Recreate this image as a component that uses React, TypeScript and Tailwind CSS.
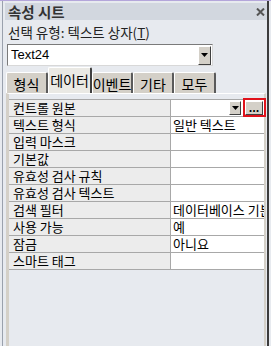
const rows: { label: string; value: string }[] = [
  { label: "컨트롤 원본", value: "" },
  { label: "텍스트 형식", value: "일반 텍스트" },
  { label: "입력 마스크", value: "" },
  { label: "기본값", value: "" },
  { label: "유효성 검사 규칙", value: "" },
  { label: "유효성 검사 텍스트", value: "" },
  { label: "검색 필터", value: "데이터베이스 기본값" },
  { label: "사용 가능", value: "예" },
  { label: "잠금", value: "아니요" },
  { label: "스마트 태그", value: "" },
];

const tabs = [
  { label: "형식", w: "w-[42px]" },
  { label: "데이터", w: "w-[44px]", active: true },
  { label: "이벤트", w: "w-[41px]" },
  { label: "기타", w: "w-[41px]" },
  { label: "모두", w: "w-[42px]" },
];

const Arrow = () => (
  <svg width="7" height="4" viewBox="0 0 7 4">
    <path d="M0 0H7L3.5 4Z" fill="#000" />
  </svg>
);

const App = () => {
  return (
    <div className="w-[271px] h-[346px] bg-[#e7eaef] border-t border-[#b4a6da] overflow-hidden font-['Noto_Sans_CJK_KR',sans-serif] text-black">
      <div className="h-full ml-[2px] mr-[2px] border-l border-[#9aa1ad] border-r-2 border-r-[#3c3c3c] flex flex-col">
        {/* title bar */}
        <div className="mt-[2px] ml-[2px] h-[17px] bg-[#d2d7df] flex items-center justify-between pl-[3px] pr-[2px]">
          <span className="text-[14.5px] font-bold leading-[16px] text-[#333]">속성 시트</span>
          <svg width="9" height="8" viewBox="0 0 9 8">
            <path d="M1 0.5L8 7.5M8 0.5L1 7.5" stroke="#555" strokeWidth="2" />
          </svg>
        </div>

        <div className="mt-[4px] h-[16px] pl-[5px] flex items-center text-[13.5px] leading-[16px] text-[#222] whitespace-nowrap">
          선택 유형: 텍스트 상자(<span className="underline">T</span>)
        </div>

        {/* combo */}
        <div className="mt-[4px] ml-[4px] w-[206px] h-[22px] bg-white border border-t-[#7a7a7a] border-l-[#7a7a7a] border-r-[#d8d8d8] border-b-[#d8d8d8] flex items-center">
          <span className="flex-1 pl-[3px] text-[13px] leading-[16px] font-['Liberation_Sans',sans-serif]">Text24</span>
          <div className="w-[13px] h-[19px] mr-[1px] bg-[#d4d0c8] border-r border-b border-[#404040] border-l border-t border-l-white border-t-white flex items-center justify-center">
            <Arrow />
          </div>
        </div>

        {/* tabs */}
        <div className="mt-[1px] h-[26px] pl-[3px] flex items-end">
          {tabs.map((t) => (
            <div
              key={t.label}
              className={
                t.active
                  ? `${t.w} h-[26px] bg-[#eae9e4] border-l border-t border-white border-r-2 border-r-[#404040] rounded-t-[2px] flex items-center justify-center text-[14px] leading-[16px] pb-[1px] whitespace-nowrap`
                  : `${t.w} h-[21px] bg-[#d4d0c8] border-l border-t border-white border-r-2 border-r-[#5a5a5a] rounded-t-[2px] flex items-center justify-center text-[14px] leading-[16px] pt-[1px] whitespace-nowrap`
              }
            >
              {t.label}
            </div>
          ))}
        </div>

        {/* panel */}
        <div className="flex-1 ml-[3px] mr-[1px] border-t border-t-white border-l-[3px] border-l-[#d4d0c8] border-r-2 border-r-[#d4d0c8] pt-[5px]">
          <div className="border-t border-[#a8a8a8]">
            {rows.map((r, i) => (
              <div key={r.label} className="flex h-[17px] border-b border-[#a8a8a8]">
                <div className="w-[162px] shrink-0 bg-[#ececec] border-r border-[#a8a8a8] pl-[4px] flex items-center text-[13px] leading-[16px] whitespace-nowrap">
                  {r.label}
                </div>
                <div className="flex-1 min-w-0 bg-white flex items-center text-[13px] leading-[16px] whitespace-nowrap relative">
                  {i === 0 ? (
                    <>
                      <div className="flex-1" />
                      <div className="w-[12px] h-[14px] bg-[#d4d0c8] border-l border-t border-white border-r border-b border-r-[#404040] border-b-[#404040] flex items-center justify-center">
                        <Arrow />
                      </div>
                      <div className="relative ml-[4px] w-[18px] h-[14px] mr-[1px]">
                        <div className="w-full h-full bg-[#d4d0c8] border-l border-t border-white border-r border-b border-r-[#404040] border-b-[#404040] flex items-center justify-center text-[11px] font-bold leading-[10px] pb-[3px]">
                          ...
                        </div>
                        <div className="absolute left-[-2px] right-[-3px] top-[-3px] bottom-[-2px] border-2 border-[#e0121b]" />
                      </div>
                    </>
                  ) : (
                    <span className="pl-[2px] overflow-hidden">{r.value}</span>
                  )}
                </div>
              </div>
            ))}
          </div>
        </div>
      </div>
    </div>
  );
};

export default App;
